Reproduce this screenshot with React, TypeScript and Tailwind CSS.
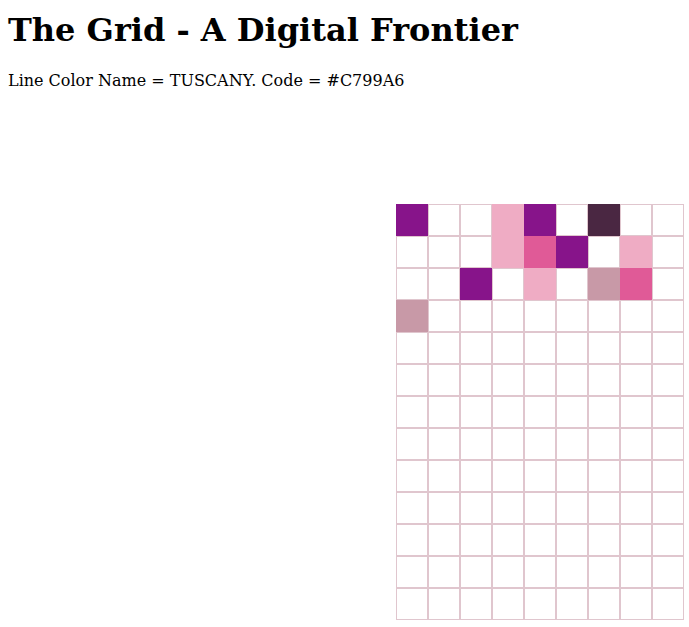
import React from "react";

const C: Record<string, string> = {
  W: "",
  P: "bg-[#87148a]",
  L: "bg-[#efacc4]",
  H: "bg-[#e05a97]",
  D: "bg-[#4a2742]",
  M: "bg-[#c899a7]",
};

const rows = [
  "PWWLPWDWW",
  "WWWLHPWLW",
  "WWPWLWMHW",
  "MWWWWWWWW",
  ...Array(9).fill("WWWWWWWWW"),
];

export default function App() {
  return (
    <div className="min-h-[627px] bg-white px-2 pt-[12px] font-['DejaVu_Serif',serif] text-black">
      <h1 className="text-[32px] font-bold leading-[37px]">The Grid - A Digital Frontier</h1>
      <p className="mt-[22px] text-[16px] leading-[19px]">Line Color Name = TUSCANY. Code = #C799A6</p>
      <div className="ml-[388px] mt-[114px] grid w-[288px] grid-cols-[repeat(9,32px)]">
        {rows.flatMap((r, ri) =>
          r.split("").map((c, ci) => (
            <div
              key={`${ri}-${ci}`}
              className={
                c === "W"
                  ? "h-[32px] w-[32px] border border-[#e0c6ce] bg-white"
                  : `h-[32px] w-[32px] ${C[c]}`
              }
            />
          ))
        )}
      </div>
    </div>
  );
}
